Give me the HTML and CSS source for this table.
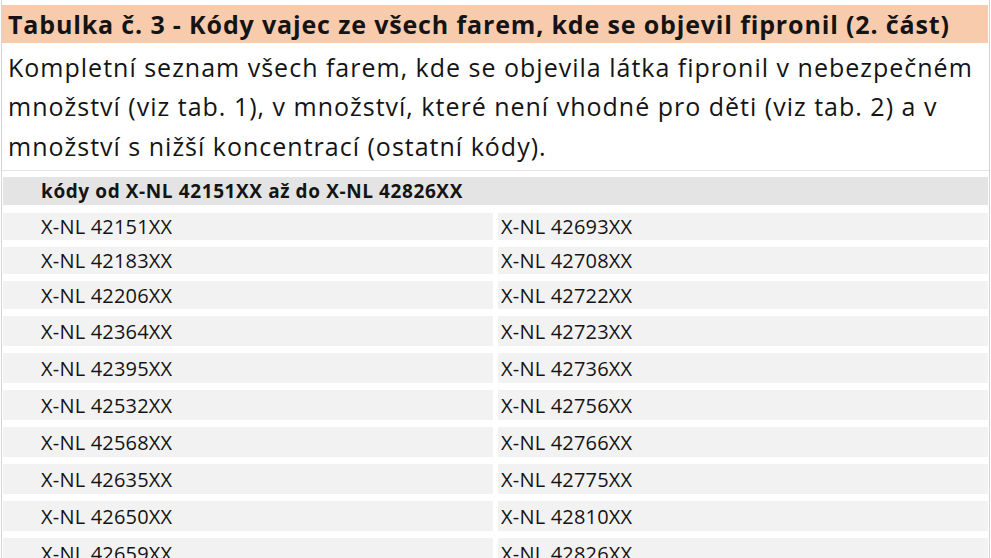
FILE: index.html
```html
<!DOCTYPE html>
<html lang="cs">
<head>
<meta charset="utf-8">
<title>Tabulka č. 3</title>
<link rel="stylesheet" href="styles.css">
</head>
<body>
<div class="sheet">
  <div class="title">Tabulka č. 3 - Kódy vajec ze všech farem, kde se objevil fipronil (2. část)</div>
  <div class="desc">Kompletní seznam všech farem, kde se objevila látka fipronil v nebezpečném<br>množství (viz tab. 1), v množství, které není vhodné pro děti (viz tab. 2) a v<br>množství s nižší koncentrací (ostatní kódy).</div>
  <div class="head">kódy od X-NL 42151XX až do X-NL 42826XX</div>
  <div class="grid">
    <div class="cell l">X-NL 42151XX</div><div class="cell r">X-NL 42693XX</div>
    <div class="cell l">X-NL 42183XX</div><div class="cell r">X-NL 42708XX</div>
    <div class="cell l">X-NL 42206XX</div><div class="cell r">X-NL 42722XX</div>
    <div class="cell l">X-NL 42364XX</div><div class="cell r">X-NL 42723XX</div>
    <div class="cell l">X-NL 42395XX</div><div class="cell r">X-NL 42736XX</div>
    <div class="cell l">X-NL 42532XX</div><div class="cell r">X-NL 42756XX</div>
    <div class="cell l">X-NL 42568XX</div><div class="cell r">X-NL 42766XX</div>
    <div class="cell l">X-NL 42635XX</div><div class="cell r">X-NL 42775XX</div>
    <div class="cell l">X-NL 42650XX</div><div class="cell r">X-NL 42810XX</div>
    <div class="cell l">X-NL 42659XX</div><div class="cell r">X-NL 42826XX</div>
  </div>
</div>
</body>
</html>
```

FILE: styles.css
```css
html, body {
  margin: 0;
  padding: 0;
  background: #ffffff;
}
body {
  font-family: "Open Sans", "Noto Sans", "Liberation Sans", sans-serif;
  color: #141414;
  overflow: hidden;
  height: 558px;
}
.sheet {
  padding-top: 5px;
  margin: 0 1px;
  border-left: 1px solid #d4d4d4;
  border-right: 1px solid #d4d4d4;
}
.title {
  background: #f8cbad;
  height: 38px;
  line-height: 38px;
  padding-left: 6px;
  margin-right: 1px;
  font-weight: bold;
  font-size: 25px;
  letter-spacing: 0.85px;
  white-space: nowrap;
}
.desc {
  height: 122.5px;
  padding: 4.5px 6px 0 6px;
  font-size: 25px;
  letter-spacing: 1px;
  line-height: 39.5px;
  white-space: nowrap;
  border-bottom: 1px solid #e4e4e4;
}
.head {
  margin: 6px 1px 0 1px;
  height: 28px;
  line-height: 28px;
  background: #e4e4e4;
  padding-left: 38px;
  font-weight: bold;
  font-size: 19px;
  letter-spacing: 0.6px;
  white-space: nowrap;
}
.grid {
  margin: 8px 1px 0 1px;
  display: grid;
  grid-template-columns: 490px 490px;
  column-gap: 5px;
  grid-template-rows: 27px 27px 28px 30px 30px 30px 30px 30px 30px 30px;
  row-gap: 7px;
}
.cell {
  background: #f2f2f2;
  font-size: 20px;
  letter-spacing: 0.2px;
  display: flex;
  align-items: center;
  white-space: nowrap;
}
.cell.l {
  padding-left: 38px;
}
.cell.r {
  padding-left: 3px;
}
```
